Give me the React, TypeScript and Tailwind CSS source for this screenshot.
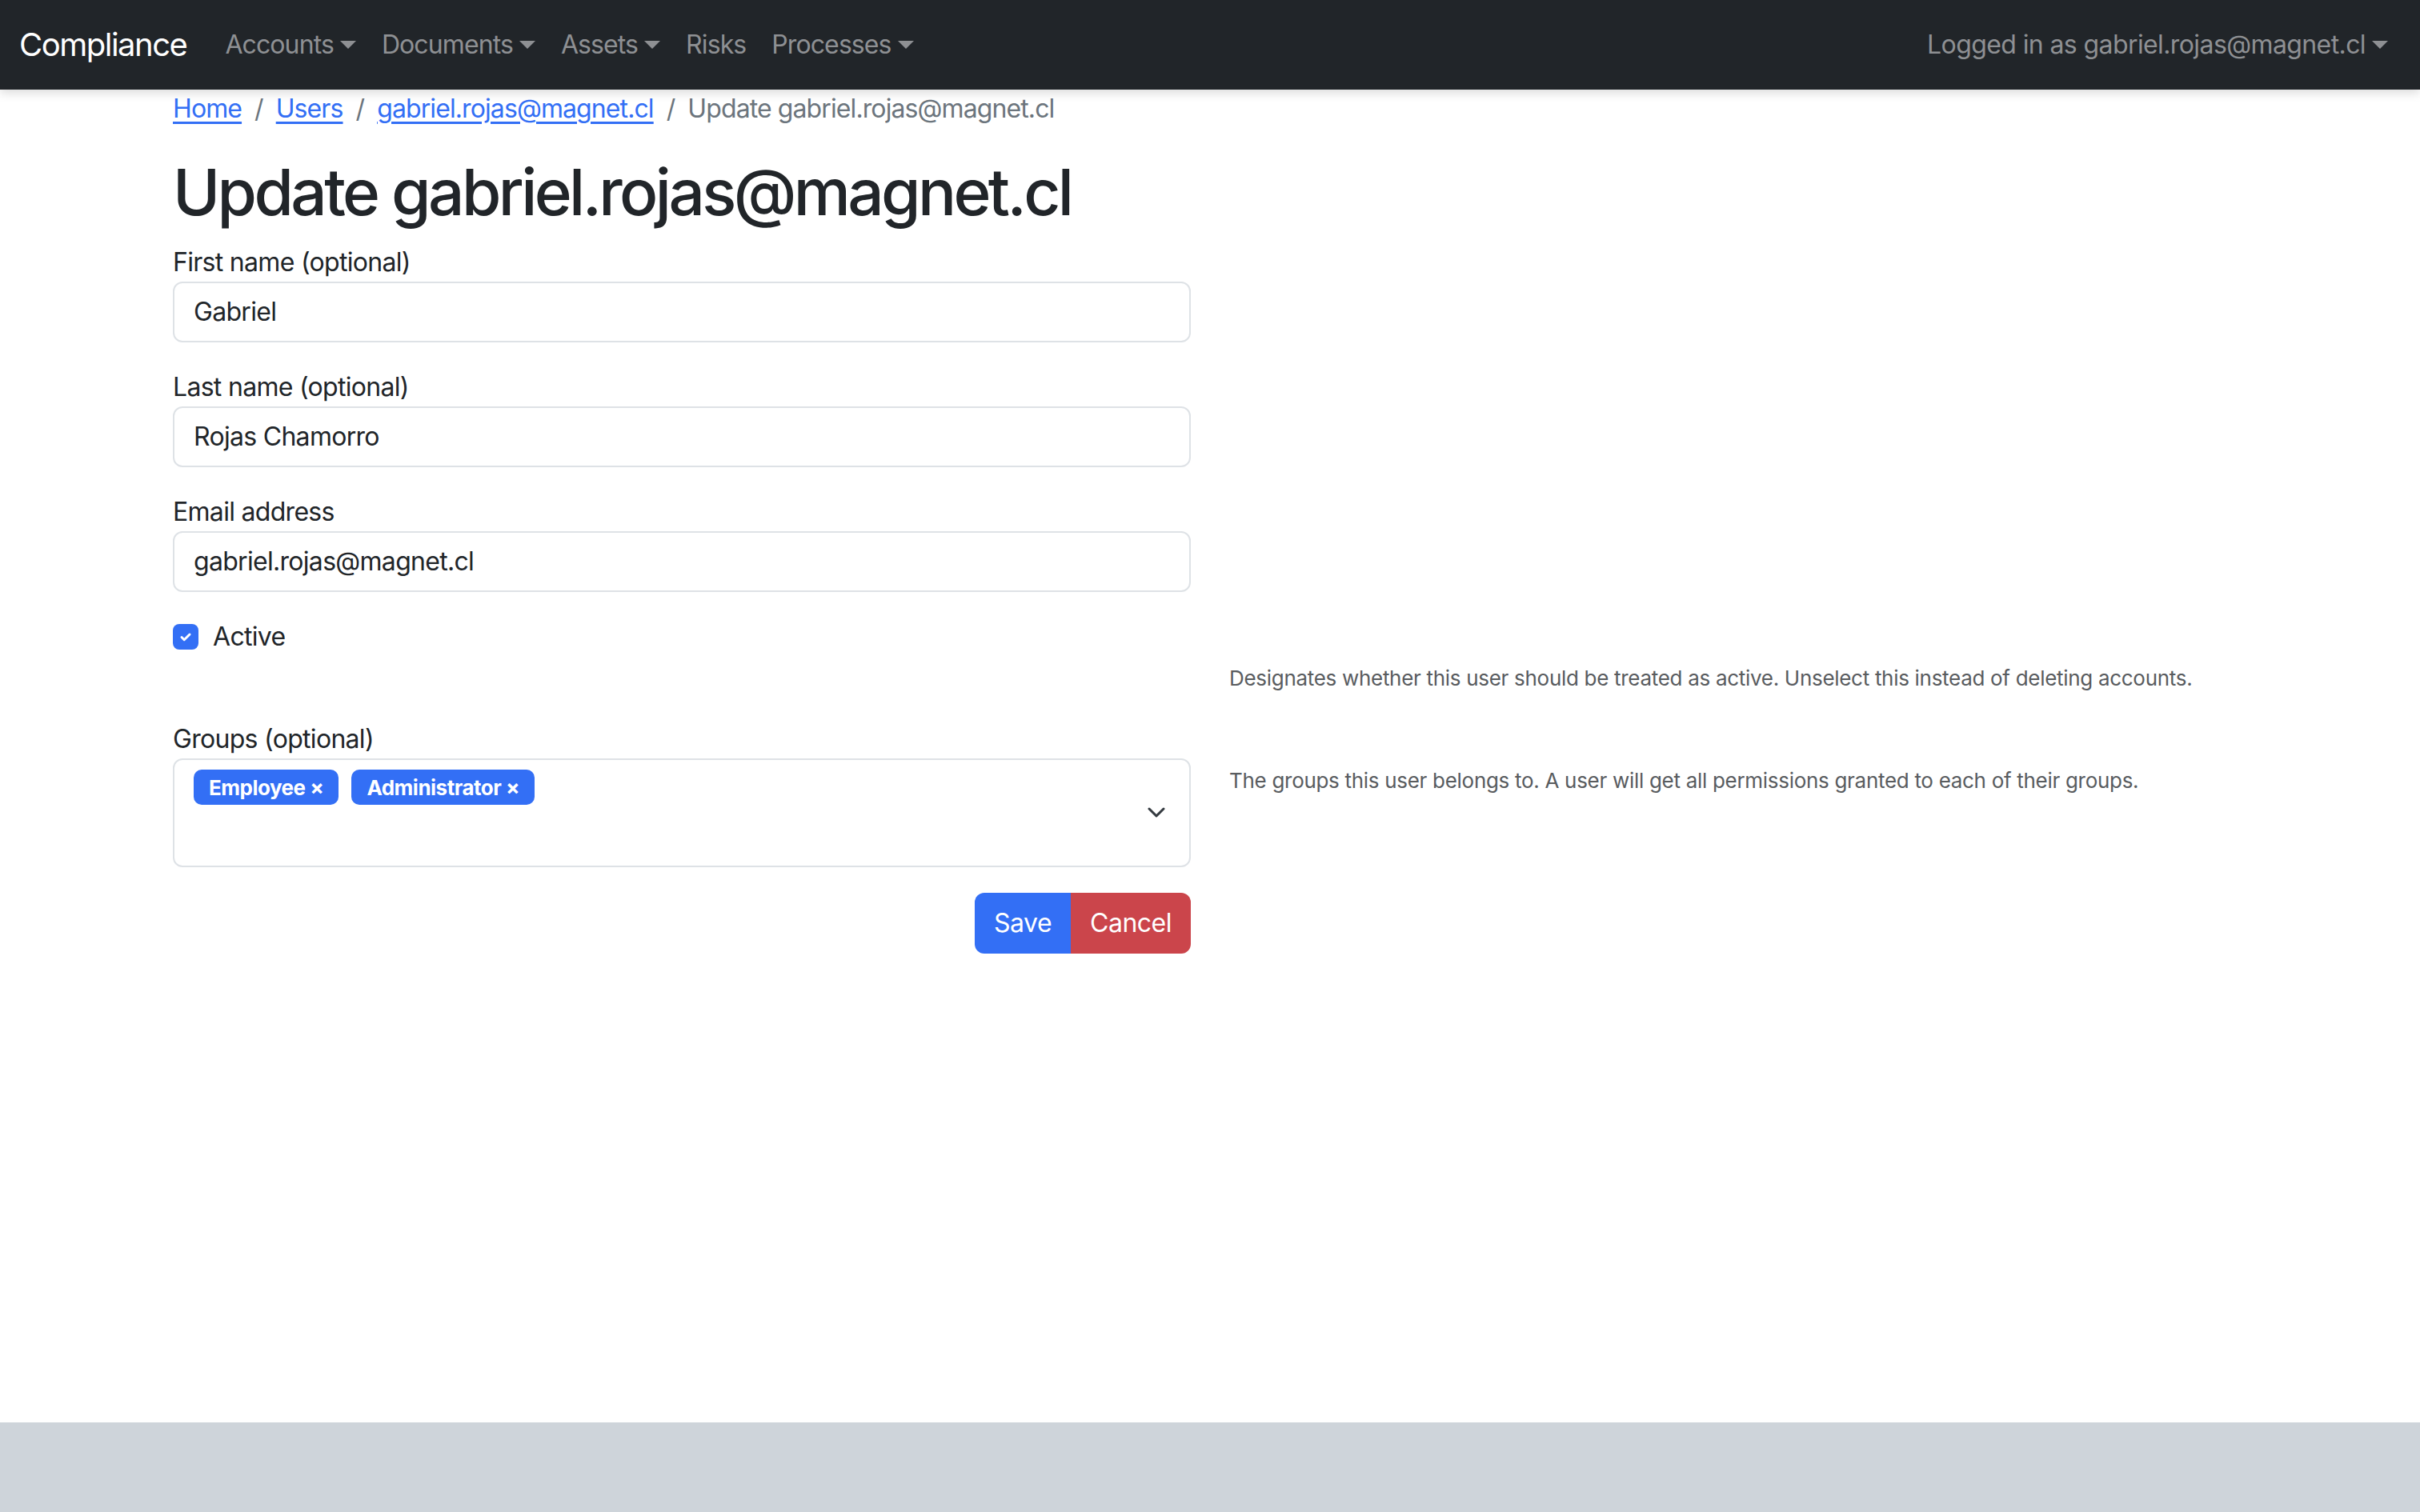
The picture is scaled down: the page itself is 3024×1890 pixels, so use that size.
const navItems = [
  { label: "Accounts", dropdown: true },
  { label: "Documents", dropdown: true },
  { label: "Assets", dropdown: true },
  { label: "Risks", dropdown: false },
  { label: "Processes", dropdown: true },
]

function Caret() {
  return (
    <span className="ml-[8px] inline-block h-0 w-0 border-t-[10px] border-r-[10px] border-l-[10px] border-r-transparent border-l-transparent align-[6px]" />
  )
}

function TextField({ label, value }: { label: string; value: string }) {
  return (
    <div className="mb-[32px] grid grid-cols-2 gap-x-[48px]">
      <div>
        <label className="block text-[32px] leading-[48px] tracking-[-0.7px] text-[#212529]">{label}</label>
        <div className="flex h-[76px] items-center rounded-[12px] border-2 border-[#dee2e6] px-[24px] text-[32px] tracking-[-0.7px] text-[#212529]">
          {value}
        </div>
      </div>
      <div />
    </div>
  )
}

function Help({ children }: { children: string }) {
  return <p className="pt-[56px] text-[26px] leading-[40px] tracking-[-0.3px] text-[#595c5f]">{children}</p>
}

export default function App() {
  return (
    <div className="flex min-h-screen flex-col bg-white font-['Inter','Noto_Sans',sans-serif] text-[#212529]">
      <nav className="relative z-10 flex h-[112px] shrink-0 items-center justify-between bg-[#212529] px-[24px] shadow-[0_4px_12px_rgba(0,0,0,0.15)]">
        <div className="flex items-center">
          <span className="mr-[32px] text-[40px] tracking-[-1.5px] text-white">Compliance</span>
          {navItems.map((item) => (
            <span key={item.label} className="px-[16px] text-[32px] tracking-[-0.9px] text-[#8e9093]">
              {item.label}
              {item.dropdown && <Caret />}
            </span>
          ))}
        </div>
        <span className="px-[16px] text-[32px] tracking-[-0.6px] text-[#8e9093]">
          Logged in as gabriel.rojas@magnet.cl
          <Caret />
        </span>
      </nav>

      <main className="flex-1">
        <div className="mx-auto w-[2640px] px-[24px]">
          <ol className="mb-[32px] flex text-[32px] leading-[48px] tracking-[-0.9px]">
            <li>
              <a className="text-[#336ff5] underline underline-offset-[5px]">Home</a>
            </li>
            <li className="px-[16px] text-[#6c757d]">/</li>
            <li>
              <a className="text-[#336ff5] underline underline-offset-[5px]">Users</a>
            </li>
            <li className="px-[16px] text-[#6c757d]">/</li>
            <li>
              <a className="text-[#336ff5] underline underline-offset-[5px]">gabriel.rojas@magnet.cl</a>
            </li>
            <li className="px-[16px] text-[#6c757d]">/</li>
            <li className="text-[#6c757d]">Update gabriel.rojas@magnet.cl</li>
          </ol>

          <h1 className="mb-[16px] text-[80px] leading-[96px] font-medium tracking-[-3.6px]">Update gabriel.rojas@magnet.cl</h1>

          <TextField label="First name (optional)" value="Gabriel" />
          <TextField label="Last name (optional)" value="Rojas Chamorro" />
          <TextField label="Email address" value="gabriel.rojas@magnet.cl" />

          <div className="mb-[32px] grid grid-cols-2 gap-x-[48px]">
            <div className="flex h-[48px] items-center">
              <span className="flex h-[32px] w-[32px] items-center justify-center rounded-[8px] bg-[#336ff5]">
                <svg width="20" height="20" viewBox="0 0 20 20" fill="none">
                  <path d="M5 10.5l3.2 3.2L15 7" stroke="white" strokeWidth="3" strokeLinecap="round" strokeLinejoin="round" />
                </svg>
              </span>
              <span className="ml-[18px] text-[32px] tracking-[-0.7px]">Active</span>
            </div>
            <Help>Designates whether this user should be treated as active. Unselect this instead of deleting accounts.</Help>
          </div>

          <div className="mb-[32px] grid grid-cols-2 gap-x-[48px]">
            <div>
              <label className="block text-[32px] leading-[48px] tracking-[-0.7px]">Groups (optional)</label>
              <div className="flex h-[136px] items-center justify-between rounded-[12px] border-2 border-[#dee2e6] pr-[30px] pl-[24px]">
                <div className="flex gap-[16px] self-start pt-[12px]">
                  {["Employee", "Administrator"].map((g) => (
                    <span
                      key={g}
                      className="flex h-[44px] items-center rounded-[10px] bg-[#336ff5] px-[19px] text-[26px] font-bold tracking-[-0.5px] text-white"
                    >
                      {g} ×
                    </span>
                  ))}
                </div>
                <svg width="22" height="14" viewBox="0 0 22 14" fill="none">
                  <path d="M2 2l9 9 9-9" stroke="#343a40" strokeWidth="3" strokeLinecap="round" strokeLinejoin="round" />
                </svg>
              </div>
            </div>
            <Help>The groups this user belongs to. A user will get all permissions granted to each of their groups.</Help>
          </div>

          <div className="grid grid-cols-2 gap-x-[48px]">
            <div className="flex justify-end">
              <button className="h-[76px] rounded-l-[12px] bg-[#336ff5] px-[24px] text-[32px] tracking-[-0.5px] text-white">Save</button>
              <button className="h-[76px] rounded-r-[12px] bg-[#cb454b] px-[24px] text-[32px] tracking-[-0.5px] text-white">Cancel</button>
            </div>
            <div />
          </div>
        </div>
      </main>

      <footer className="h-[112px] shrink-0 bg-[#ced4da]" />
    </div>
  )
}
